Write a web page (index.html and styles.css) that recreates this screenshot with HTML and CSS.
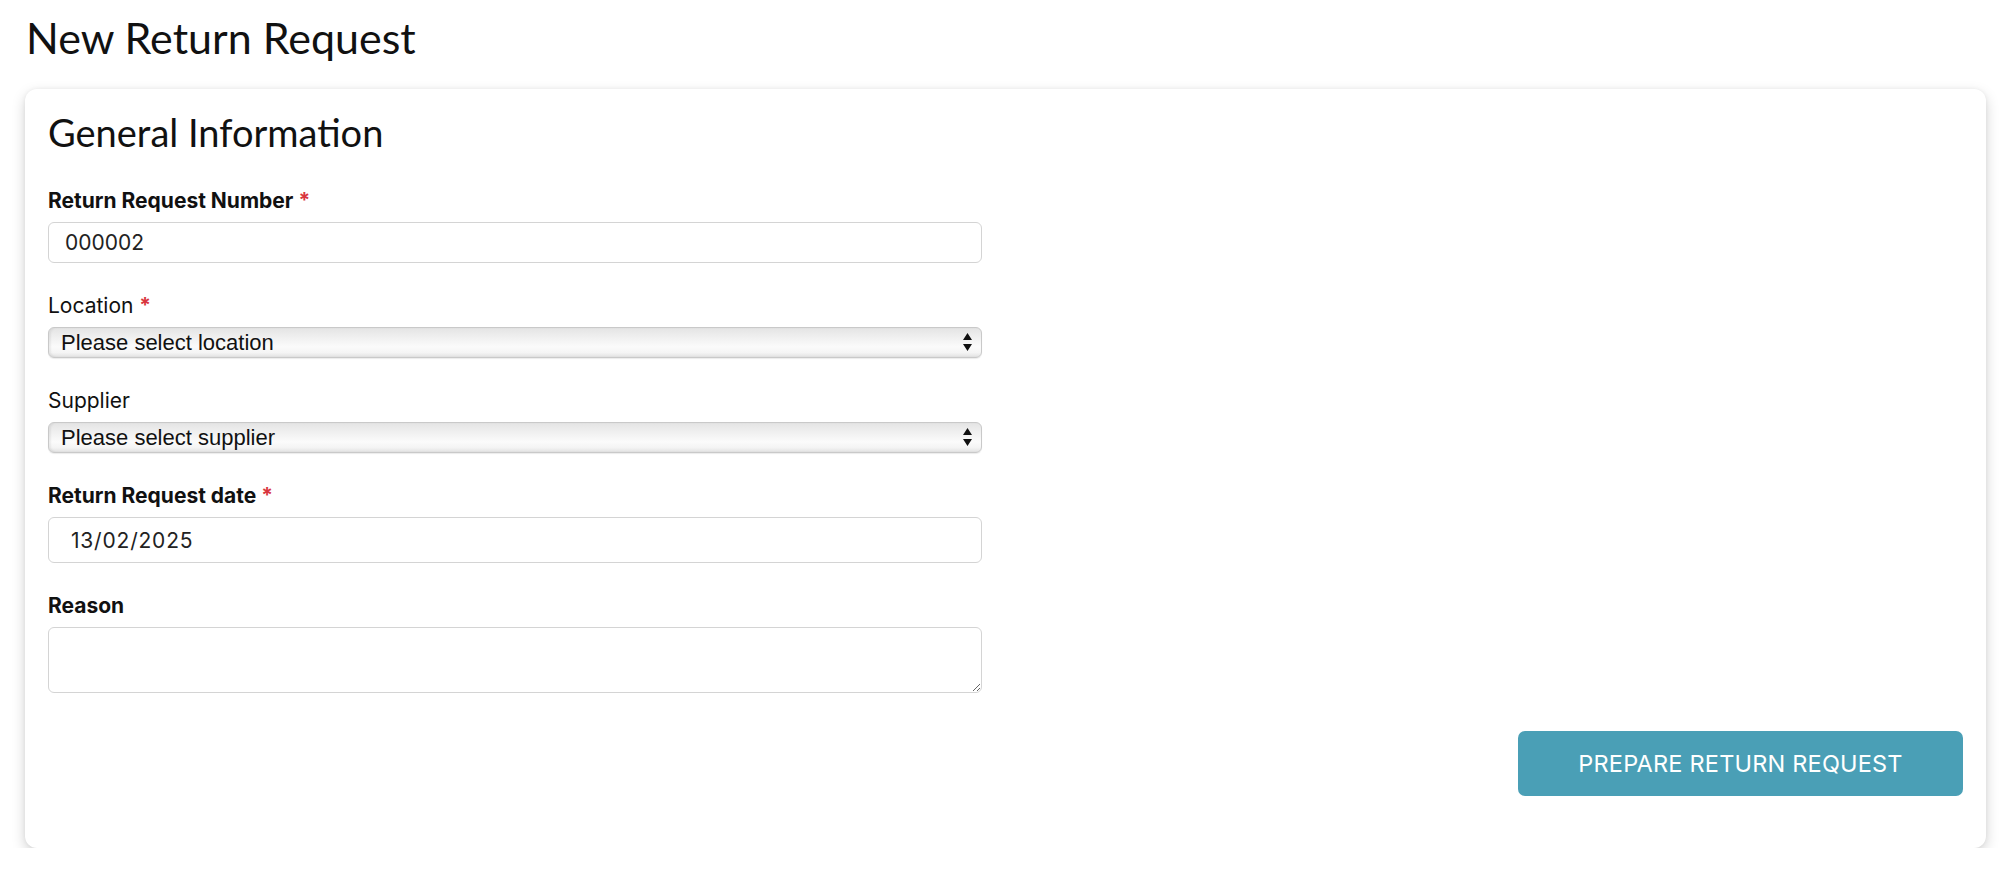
FILE: index.html
```html
<!DOCTYPE html>
<html lang="en">
<head>
<meta charset="utf-8">
<title>New Return Request</title>
<link rel="stylesheet" href="styles.css">
</head>
<body>
<div class="page">
  <h1 class="page-title">New Return Request</h1>
  <section class="card">
    <h2 class="card-title">General Information</h2>
    <form class="form">
      <div class="field">
        <label class="label label-bold">Return Request Number <span class="req">*</span></label>
        <input class="input input-number" type="text" value="000002">
      </div>
      <div class="field">
        <label class="label">Location <span class="req">*</span></label>
        <div class="select-wrap">
          <select class="select"><option>Please select location</option></select>
          <svg class="select-arrows" viewBox="0 0 9 18" width="9" height="18"><path d="M4.5 0 L9 7 L0 7 Z M0 11 L9 11 L4.5 18 Z" fill="#111"/></svg>
        </div>
      </div>
      <div class="field">
        <label class="label">Supplier</label>
        <div class="select-wrap">
          <select class="select"><option>Please select supplier</option></select>
          <svg class="select-arrows" viewBox="0 0 9 18" width="9" height="18"><path d="M4.5 0 L9 7 L0 7 Z M0 11 L9 11 L4.5 18 Z" fill="#111"/></svg>
        </div>
      </div>
      <div class="field">
        <label class="label label-bold">Return Request date <span class="req">*</span></label>
        <input class="input input-date" type="text" value="13/02/2025">
      </div>
      <div class="field">
        <label class="label label-bold">Reason</label>
        <textarea class="textarea"></textarea>
      </div>
    </form>
    <div class="actions">
      <button class="btn-primary" type="button">PREPARE RETURN REQUEST</button>
    </div>
  </section>
</div>
</body>
</html>
```
FILE: styles.css
```css
* { box-sizing: border-box; }
html, body { margin: 0; padding: 0; background: #ffffff; }
body { font-family: "Inter", "Noto Sans", sans-serif; color: #111; }

.page { padding: 0 26px 0 25px; }

.page-title {
  margin: 0;
  padding-top: 12px;
  padding-left: 1px;
  font-family: "Lato", sans-serif;
  font-weight: 400;
  font-size: 43px;
  line-height: 52px;
  color: #111;
}

.card {
  margin-top: 25px;
  background: #fff;
  border-radius: 12px;
  box-shadow: 0 5px 14px rgba(0,0,0,0.18), 0 0 4px rgba(0,0,0,0.05);
  padding: 19px 23px 52px 23px;
  height: 759px;
}

.card-title {
  margin: 0;
  font-family: "Lato", sans-serif;
  font-weight: 400;
  font-size: 38px;
  line-height: 48px;
  color: #111;
}

.form {
  width: 934px;
  display: flex;
  flex-direction: column;
  gap: 30px;
  margin-top: 32px;
}

.field { display: flex; flex-direction: column; }

.label {
  font-family: "Inter", sans-serif;
  font-size: 21px;
  line-height: 25px;
  font-weight: 400;
  color: #111;
  margin-bottom: 9px;
}
.label-bold { font-weight: 700; }
.req { color: #d9363e; font-weight: 700; }

.input {
  height: 41px;
  border: 1.5px solid #d4d4d4;
  border-radius: 6px;
  background: #fff;
  font-family: "Inter", sans-serif;
  font-size: 21px;
  color: #222;
  padding: 0 16px;
  outline: none;
}
.input-date { height: 46px; padding-left: 22px; letter-spacing: 0.8px; }

.select-wrap { position: relative; }
.select {
  appearance: none;
  -webkit-appearance: none;
  width: 100%;
  height: 31px;
  border: 1px solid #c9c9c9;
  border-radius: 6px;
  background: linear-gradient(#e4e4e4 0%, #efefef 30%, #fbfbfb 65%, #f4f4f4 85%, #e2e2e2 100%);
  box-shadow: inset 2px 0 2px rgba(0,0,0,0.06), 0 1px 1px rgba(0,0,0,0.08);
  font-family: "Liberation Sans", Arial, sans-serif;
  font-size: 22px;
  color: #111;
  padding: 0 12px;
  outline: none;
}
.select-arrows {
  position: absolute;
  right: 10px;
  top: 6px;
  pointer-events: none;
}

.textarea {
  height: 66px;
  border: 1.5px solid #d4d4d4;
  border-radius: 6px;
  resize: vertical;
  font-family: "Inter", sans-serif;
  font-size: 20px;
  outline: none;
}

.actions {
  display: flex;
  justify-content: flex-end;
  margin-top: 38px;
}

.btn-primary {
  width: 445px;
  height: 65px;
  border: none;
  border-radius: 7px;
  background: #4a9fb6;
  color: #fff;
  font-family: "Inter", sans-serif;
  font-size: 23.5px;
  font-weight: 400;
  letter-spacing: 0.2px;
  cursor: pointer;
}
```
